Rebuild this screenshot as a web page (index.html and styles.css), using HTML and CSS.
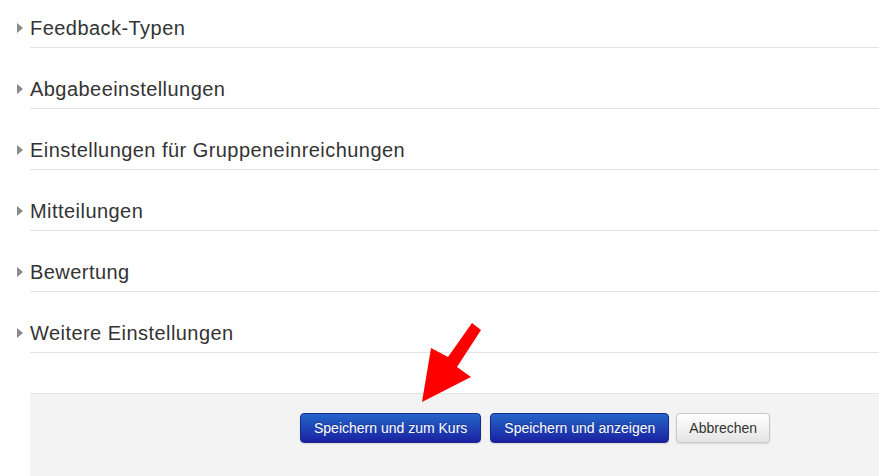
FILE: index.html
```html
<!DOCTYPE html>
<html lang="de">
<head>
    <meta charset="UTF-8">
    <title>Aufgabe bearbeiten</title>
    <link rel="stylesheet" href="styles.css">
</head>
<body>
<div class="page">
    <form class="mform">
        <fieldset class="collapsible">
            <legend><span class="arrow"></span>Feedback-Typen</legend>
        </fieldset>
        <fieldset class="collapsible">
            <legend><span class="arrow"></span>Abgabeeinstellungen</legend>
        </fieldset>
        <fieldset class="collapsible">
            <legend><span class="arrow"></span>Einstellungen für Gruppeneinreichungen</legend>
        </fieldset>
        <fieldset class="collapsible">
            <legend><span class="arrow"></span>Mitteilungen</legend>
        </fieldset>
        <fieldset class="collapsible">
            <legend><span class="arrow"></span>Bewertung</legend>
        </fieldset>
        <fieldset class="collapsible">
            <legend><span class="arrow"></span>Weitere Einstellungen</legend>
        </fieldset>

        <div class="form-actions">
            <button type="button" class="btn btn-primary">Speichern und zum Kurs</button>
            <button type="button" class="btn btn-primary">Speichern und anzeigen</button>
            <button type="button" class="btn">Abbrechen</button>
        </div>
    </form>

    <!-- roter Hinweispfeil -->
    <svg class="hint" width="80" height="90" viewBox="415 318 80 90">
        <polygon points="472,323 481,330 457,367 471,377 422,402 431,348 448,357" fill="#ff0000"/>
    </svg>
</div>
</body>
</html>
```

FILE: styles.css
```css
*{
    margin:0;
    padding:0;
    box-sizing:border-box;
}
body{
    font-family:"Liberation Sans", Arial, Helvetica, sans-serif;
    color:#333;
    background:#fff;
}
.page{
    position:relative;
    padding-top:17px;
    overflow:hidden;
    height:476px;
}
.mform{
    display:flex;
    flex-direction:column;
}
fieldset{
    border:0;
    margin-left:30px;
    margin-bottom:30px;
    border-bottom:1px solid #e2e2e2;
}
legend{
    display:flex;
    align-items:center;
    font-size:20px;
    line-height:23px;
    letter-spacing:0.45px;
    padding-bottom:7px;
    color:#333;
    float:left;
    width:100%;
}
.arrow{
    width:0;
    height:0;
    margin-left:-13px;
    margin-right:7px;
    margin-top:-2px;
    border-top:5px solid transparent;
    border-bottom:5px solid transparent;
    border-left:6px solid #8a8a8a;
}
.form-actions{
    margin-left:30px;
    margin-top:10px;
    padding:19px 0 40px 270px;
    background:#f3f3f3;
    border-top:1px solid #e5e5e5;
    display:flex;
    gap:9px;
}
.btn{
    height:30px;
    padding:0 13px;
    font-family:"Liberation Sans", Arial, Helvetica, sans-serif;
    font-size:14px;
    color:#333;
    background:linear-gradient(#ffffff, #e4e4e4);
    border:1px solid #c8c8c8;
    border-radius:4px;
    box-shadow:0 1px 2px rgba(0,0,0,0.12);
}
.btn:last-child{
    margin-left:-2px;
    padding:0 12px;
}
.btn-primary{
    color:#fff;
    background:linear-gradient(#2466c9, #1b21a1);
    border-color:#1a2a8c;
    text-shadow:0 -1px 0 rgba(0,0,0,0.25);
}
.hint{
    position:absolute;
    left:415px;
    top:318px;
}
```
